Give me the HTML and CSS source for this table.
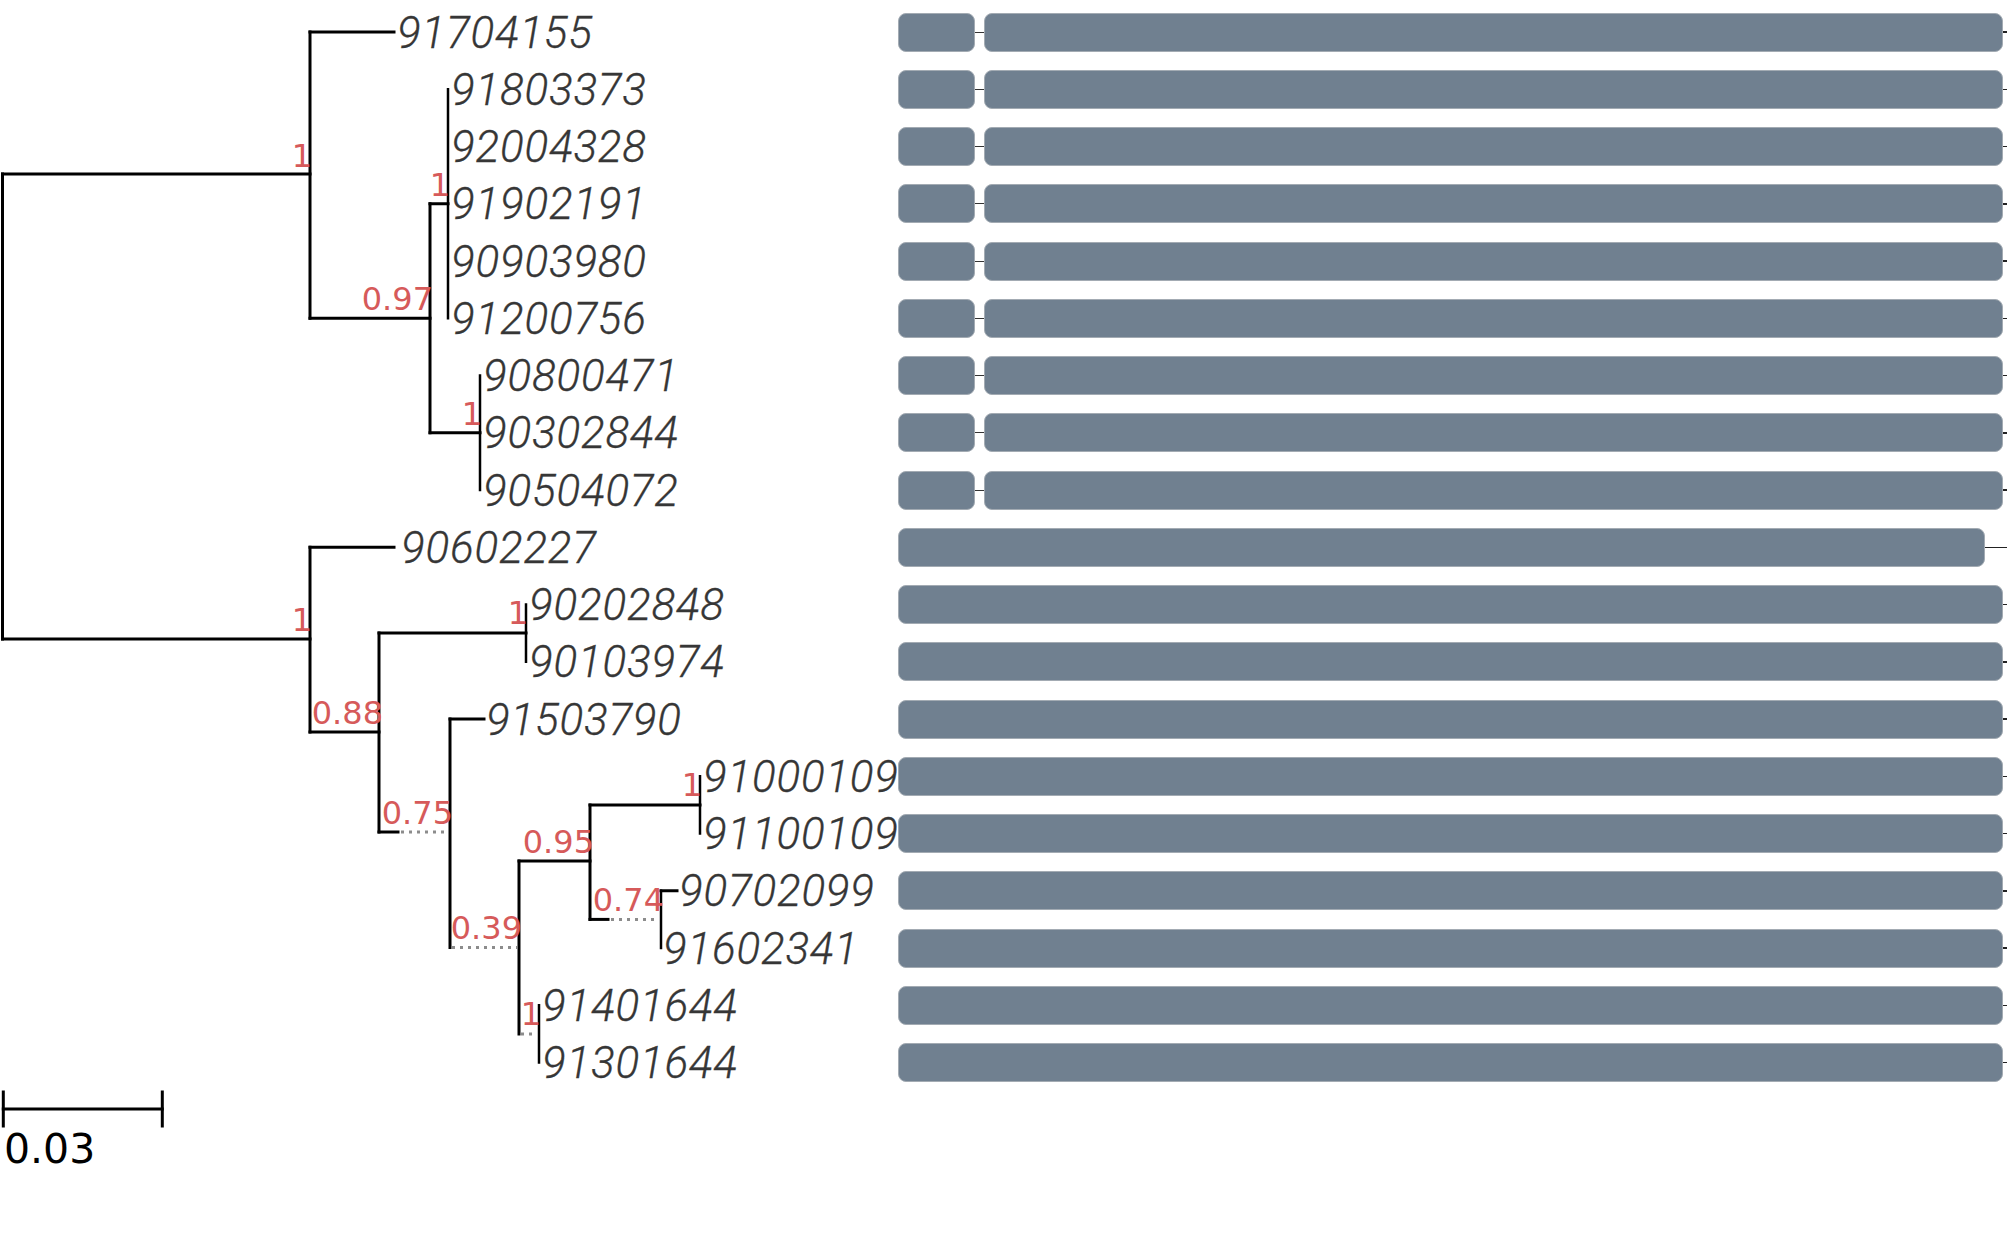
FILE: index.html
```html
<!DOCTYPE html>
<html>
<head>
<meta charset="utf-8">
<link rel="stylesheet" href="styles.css">
</head>
<body>
<div class="figure">
  <svg class="tree" width="898" height="1252" viewBox="0 0 898 1252">
    <g class="branches">
      <path d="M2.5 174 V639"/>
      <path d="M2.5 174 H310"/>
      <path d="M310 32 V318.25"/>
      <path d="M310 32 H394"/>
      <path d="M310 318.25 H430"/>
      <path d="M430 203.75 V432.75"/>
      <path d="M430 203.75 H448"/>
      <path class="thin" d="M448 89.25 V318.25"/>
      <path d="M430 432.75 H480"/>
      <path class="thin" d="M480 375.5 V490"/>
      <path d="M2.5 639 H310"/>
      <path d="M310 547.25 V732"/>
      <path d="M310 547.25 H394"/>
      <path d="M310 732 H379"/>
      <path d="M379 633 V832"/>
      <path d="M379 633 H526"/>
      <path class="thin" d="M526 604.5 V661.75"/>
      <path d="M379 832 H398"/>
      <path d="M450 719 V947.5"/>
      <path d="M450 719 H484"/>
      <path d="M519 861 V1034"/>
      <path d="M519 861 H590"/>
      <path d="M590 805 V919.4"/>
      <path d="M590 805 H700"/>
      <path class="thin" d="M700 776.25 V833.5"/>
      <path d="M590 919.4 H608"/>
      <path class="thin" d="M661 890.75 V948"/>
      <path d="M661 890.75 H677"/>
      <path class="thin" d="M539 1005.25 V1062.5"/>
    </g>
    <g class="dotted">
      <path d="M401 832 H448"/>
      <path d="M452 947.5 H517"/>
      <path d="M611 919.4 H659"/>
      <path d="M521 1034 H537"/>
    </g>
    <g class="leaf">
      <text x="397" y="47.5">91704155</text>
      <text x="451" y="104.7">91803373</text>
      <text x="451" y="162">92004328</text>
      <text x="451" y="219.2">91902191</text>
      <text x="451" y="276.5">90903980</text>
      <text x="451" y="333.7">91200756</text>
      <text x="483" y="391">90800471</text>
      <text x="483" y="448.2">90302844</text>
      <text x="483" y="505.5">90504072</text>
      <text x="401" y="562.7">90602227</text>
      <text x="529" y="620">90202848</text>
      <text x="529" y="677.2">90103974</text>
      <text x="486" y="734.5">91503790</text>
      <text x="703" y="791.7">91000109</text>
      <text x="703" y="849">91100109</text>
      <text x="679" y="906.2">90702099</text>
      <text x="663" y="963.5">91602341</text>
      <text x="542" y="1020.7">91401644</text>
      <text x="542" y="1078">91301644</text>
    </g>
    <g class="support">
      <text x="312" y="167">1</text>
      <text x="450" y="196">1</text>
      <text x="433" y="310">0.97</text>
      <text x="482" y="425">1</text>
      <text x="312" y="631">1</text>
      <text x="383" y="724">0.88</text>
      <text x="528" y="624">1</text>
      <text x="453" y="824">0.75</text>
      <text x="522" y="939">0.39</text>
      <text x="594" y="853">0.95</text>
      <text x="702" y="796">1</text>
      <text x="664" y="911">0.74</text>
      <text x="541" y="1025">1</text>
    </g>
    <g class="scale">
      <path d="M3.3 1109 H162.3"/>
      <path d="M3.3 1092 V1126"/>
      <path d="M162.3 1092 V1126"/>
      <text x="4" y="1163">0.03</text>
    </g>
  </svg>
  <div class="tracks">
    <div class="track"><div class="seg lead"></div><span class="link"></span><div class="seg main"></div><span class="tail"></span></div>
    <div class="track"><div class="seg lead"></div><span class="link"></span><div class="seg main"></div><span class="tail"></span></div>
    <div class="track"><div class="seg lead"></div><span class="link"></span><div class="seg main"></div><span class="tail"></span></div>
    <div class="track"><div class="seg lead"></div><span class="link"></span><div class="seg main"></div><span class="tail"></span></div>
    <div class="track"><div class="seg lead"></div><span class="link"></span><div class="seg main"></div><span class="tail"></span></div>
    <div class="track"><div class="seg lead"></div><span class="link"></span><div class="seg main"></div><span class="tail"></span></div>
    <div class="track"><div class="seg lead"></div><span class="link"></span><div class="seg main"></div><span class="tail"></span></div>
    <div class="track"><div class="seg lead"></div><span class="link"></span><div class="seg main"></div><span class="tail"></span></div>
    <div class="track"><div class="seg lead"></div><span class="link"></span><div class="seg main"></div><span class="tail"></span></div>
    <div class="track"><div class="seg short"></div><span class="tail"></span></div>
    <div class="track"><div class="seg full"></div><span class="tail"></span></div>
    <div class="track"><div class="seg full"></div><span class="tail"></span></div>
    <div class="track"><div class="seg full"></div><span class="tail"></span></div>
    <div class="track"><div class="seg full"></div><span class="tail"></span></div>
    <div class="track"><div class="seg full"></div><span class="tail"></span></div>
    <div class="track"><div class="seg full"></div><span class="tail"></span></div>
    <div class="track"><div class="seg full"></div><span class="tail"></span></div>
    <div class="track"><div class="seg full"></div><span class="tail"></span></div>
    <div class="track"><div class="seg full"></div><span class="tail"></span></div>
  </div>
</div>
</body>
</html>
```

FILE: styles.css
```css
html, body {
  margin: 0;
  padding: 0;
  background: #ffffff;
}

.figure {
  display: flex;
  align-items: flex-start;
  width: 2007px;
  height: 1252px;
  overflow: hidden;
}

.tree {
  flex: none;
  display: block;
  overflow: visible;
}

.branches path,
.scale path {
  fill: none;
  stroke: #000000;
  stroke-width: 3;
  stroke-linecap: square;
}

.branches path.thin {
  stroke-width: 2.5;
}

.dotted path {
  fill: none;
  stroke: #8c8c8c;
  stroke-width: 3;
  stroke-dasharray: 3 5;
}

.leaf text {
  font-family: Roboto, "Liberation Sans", sans-serif;
  font-style: italic;
  font-weight: 300;
  font-size: 44px;
  letter-spacing: 0.8px;
  fill: #363636;
  stroke: #363636;
  stroke-width: 0.3px;
}

.support text {
  font-family: "DejaVu Sans", sans-serif;
  font-size: 32px;
  fill: #d65a5a;
  text-anchor: end;
}

.scale text {
  font-family: "DejaVu Sans", sans-serif;
  font-size: 41px;
  fill: #000000;
}

.tracks {
  flex: none;
  width: 1109px;
  display: flex;
  flex-direction: column;
  padding-top: 3.4px;
}

.track {
  height: 57.25px;
  display: flex;
  align-items: center;
}

.seg {
  flex: none;
  height: 39px;
  box-sizing: border-box;
  background: #708090;
  border: 1px solid #a3abb3;
  border-radius: 8px;
}

.lead { width: 77px; }
.main { width: 1019px; }
.full { width: 1105px; }
.short { width: 1087px; }

.link {
  flex: none;
  width: 9px;
  height: 1px;
  background: #333333;
}

.tail {
  flex: 1;
  height: 1.5px;
  background: #222222;
}
```
